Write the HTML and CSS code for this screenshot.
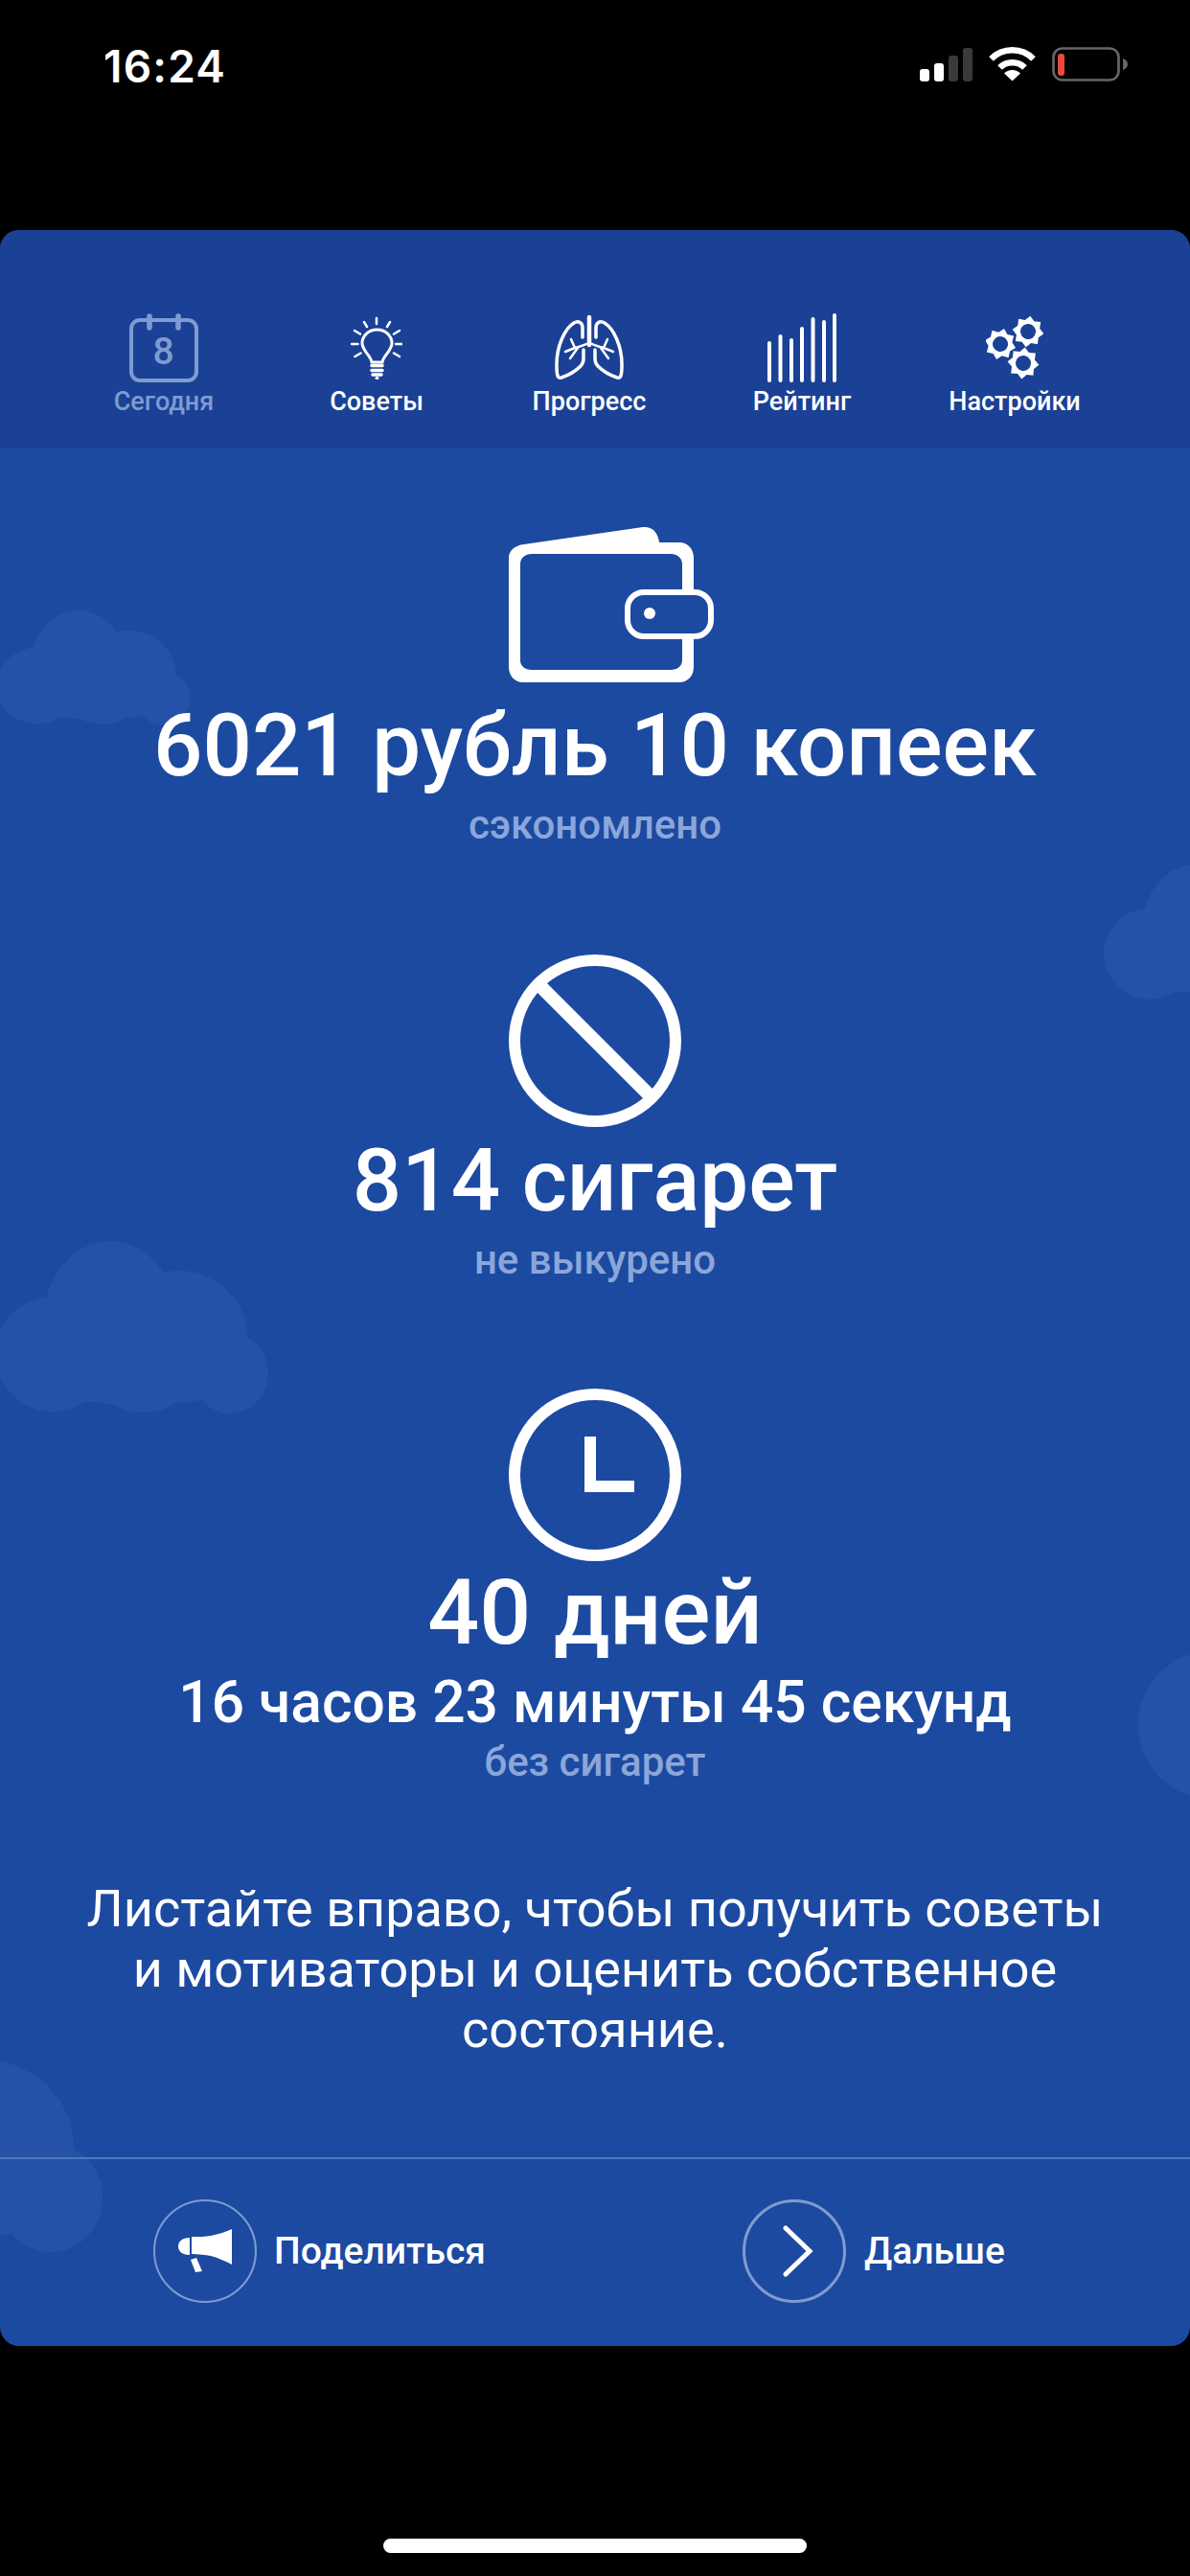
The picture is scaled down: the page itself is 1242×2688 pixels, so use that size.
FILE: index.html
```html
<!DOCTYPE html>
<html lang="ru">
<head>
<meta charset="utf-8">
<title>Сегодня</title>
<link rel="stylesheet" href="styles.css">
</head>
<body>
<svg class="defs" width="0" height="0"><defs>
  <g id="cloud" fill="#2552a8">
    <ellipse cx="55" cy="118" rx="60" ry="60"/>
    <ellipse cx="115" cy="85" rx="70" ry="85"/>
    <ellipse cx="187" cy="100" rx="71" ry="69"/>
    <ellipse cx="240" cy="138" rx="40" ry="42"/>
    <ellipse cx="150" cy="130" rx="55" ry="49"/>
    <rect x="50" y="100" width="150" height="68"/>
  </g>
  <path id="gear" fill-rule="evenodd" d="M0-16.500L4.780-11.550L11.670-11.670L11.550-4.780L16.500 0L11.550 4.780L11.670 11.670L4.780 11.550L0 16.500L-4.780 11.550L-11.670 11.670L-11.550 4.780L-16.500 0L-11.550-4.780L-11.670-11.670L-4.780-11.550ZM8 0a8 8 0 1 0-16 0a8 8 0 1 0 16 0Z"/>
</defs></svg>
<div class="phone">
  <header class="statusbar">
    <span class="time">16:24</span>
    <div class="indicators">
      <svg class="sig" width="55" height="36" viewBox="0 0 55 36"><rect x="0" y="22" width="10" height="13" rx="3" fill="#fff"/><rect x="15" y="16" width="10" height="19" rx="3" fill="#fff"/><rect x="30" y="8" width="10" height="27" rx="3" fill="#3a3a3a"/><rect x="45" y="0" width="10" height="35" rx="3" fill="#3a3a3a"/></svg>
      <svg class="wifi" width="49" height="36" viewBox="0 0 49 36"><path d="M2.500 12.500 A31 31 0 0 1 46.500 12.500" fill="none" stroke="#fff" stroke-width="6.500"/><path d="M11.500 21.500 A18.500 18.500 0 0 1 37.500 21.500" fill="none" stroke="#fff" stroke-width="6.500"/><path d="M16 27.500 A12 12 0 0 1 33 27.500 L24.500 35.500Z" fill="#fff"/></svg>
      <svg class="batt" width="79" height="37" viewBox="0 0 79 37"><rect x="1.500" y="1.500" width="68" height="33" rx="9" fill="none" stroke="#666" stroke-width="2.700"/><rect x="6" y="7" width="7" height="23" rx="3" fill="#eb4a3a"/><path d="M74 12 C77 13 79 15 79 18 C79 21 77 23 74 24Z" fill="#666"/></svg>
    </div>
  </header>

  <main class="card">
    <svg class="cloud c1" viewBox="0 0 280 200" preserveAspectRatio="none"><use href="#cloud"/></svg>
    <svg class="cloud c2" viewBox="0 0 280 200" preserveAspectRatio="none"><use href="#cloud"/></svg>
    <svg class="cloud c3" viewBox="0 0 280 200" preserveAspectRatio="none"><use href="#cloud"/></svg>
    <svg class="cloud c4" viewBox="0 0 280 200" preserveAspectRatio="none"><use href="#cloud"/></svg>
    <svg class="cloud c5" viewBox="0 0 280 200" preserveAspectRatio="none"><use href="#cloud"/></svg>

    <nav class="tabs">
      <div class="tab muted">
        <svg width="72" height="72" viewBox="0 0 72 72"><rect x="2" y="7" width="68" height="63" rx="9" fill="none" stroke="#7e9bd2" stroke-width="4"/><path d="M21 3v12M51 3v12" stroke="#7e9bd2" stroke-width="5.500" stroke-linecap="round"/><text x="35.500" y="53" class="cal">8</text></svg>
        <span>Сегодня</span>
      </div>
      <div class="tab">
        <svg width="54" height="72" viewBox="0 0 54 72" fill="none" stroke="#fff"><path d="M22 51 C21 44 12 39 12 31 A15.500 14 0 0 1 43 31 C43 39 34 44 33 51Z" stroke-width="3"/><path d="M22 54.500h11M22 59.500h11M23 64h9" stroke-width="3.500" stroke-linecap="round"/><path d="M27 67.500h1" stroke-width="3" stroke-linecap="round"/><path d="M27 5v6M14 9l3 5M41 9l-3 5M4 18l6 3.500M51 18l-6 3.500M1 32h6.500M54 32h-7M4.500 45l6-3.500M51 45l-6-3.500" stroke-width="2.500" stroke-linecap="round"/></svg>
        <span>Советы</span>
      </div>
      <div class="tab">
        <svg width="72" height="72" viewBox="0 0 72 72" fill="none" stroke="#fff" stroke-linecap="round" stroke-linejoin="round"><g transform="translate(0 3)"><path d="M36 1V30" stroke-width="4.500"/><path d="M29 22 V12 C29 7 25 4 20 7 C10 13 2 32 2 50 C2 58 2 66 7 64 C13 62 22 57 27 52 C29 50 30 47 30 44 V35" stroke-width="3.500"/><path d="M43 22 V12 C43 7 47 4 52 7 C62 13 70 32 70 50 C70 58 70 66 65 64 C59 62 50 57 45 52 C43 50 42 47 42 44 V35" stroke-width="3.500"/><path d="M36 28 C30 30 26 32 21 33 L11 37M36 28 C42 30 46 32 51 33 L61 37M21 33 L17 24M51 33 L55 24M24 33 L16 44M48 33 L56 44" stroke-width="2.500"/></g></svg>
        <span>Прогресс</span>
      </div>
      <div class="tab">
        <svg width="72" height="72" viewBox="0 0 72 72" fill="#fff"><rect x="0" y="29" width="4" height="43" rx="2"/><rect x="11.500" y="22" width="4" height="50" rx="2"/><rect x="23" y="26" width="4" height="46" rx="2"/><rect x="34" y="14" width="4" height="58" rx="2"/><rect x="45.500" y="4" width="4" height="68" rx="2"/><rect x="57" y="7" width="4" height="65" rx="2"/><rect x="68" y="0" width="4" height="72" rx="2"/></svg>
        <span>Рейтинг</span>
      </div>
      <div class="tab">
        <svg width="60" height="72" viewBox="0 0 60 72" fill="#fff"><use href="#gear" transform="translate(44 19) rotate(8)"/><use href="#gear" transform="translate(15 32) rotate(14)"/><use href="#gear" transform="translate(39 52) rotate(6)"/></svg>
        <span>Настройки</span>
      </div>
    </nav>

    <section class="stats">
      <div class="stat">
        <svg class="big wallet" width="214" height="163" viewBox="0 0 214 163"><path fill="#fff" fill-rule="evenodd" d="M16 19 L140 1 C150 0 156 7 157 17 L178 17 C187 17 193 24 193 33 L193 147 C193 157 186 163 178 163 L15 163 C6 163 0 156 0 147 L0 33 C0 26 6 20 16 19Z M24 29 L169 29 C176 29 181 33 181 40 L181 140 C181 146 176 150 169 150 L24 150 C17 150 12 146 12 140 L12 40 C12 33 17 29 24 29Z"/><rect x="124" y="69" width="87" height="46" rx="17" fill="#1c4aa1" stroke="#fff" stroke-width="6"/><circle cx="147" cy="91" r="6" fill="#fff"/></svg>
        <div class="value">6021 рубль 10 копеек</div>
        <div class="caption">сэкономлено</div>
      </div>
      <div class="stat s2">
        <svg class="big" width="180" height="180" viewBox="0 0 180 180"><circle cx="90" cy="90" r="84" fill="none" stroke="#fff" stroke-width="12"/><path d="M30 30 L150 150" stroke="#fff" stroke-width="14"/></svg>
        <div class="value">814 сигарет</div>
        <div class="caption">не выкурено</div>
      </div>
      <div class="stat s3">
        <svg class="big" width="180" height="180" viewBox="0 0 180 180"><circle cx="90" cy="90" r="84" fill="none" stroke="#fff" stroke-width="12"/><path d="M85 50 V102 H131" fill="none" stroke="#fff" stroke-width="12"/></svg>
        <div class="value days">40 дней</div>
        <div class="value small">16 часов 23 минуты 45 секунд</div>
        <div class="caption">без сигарет</div>
      </div>
      <p class="hint">Листайте вправо, чтобы получить советы и мотиваторы и оценить собственное состояние.</p>
    </section>

    <footer class="actions">
      <div class="action share">
        <span class="round">
          <svg width="56" height="46" viewBox="0 0 56 46" fill="#fff"><path d="M12 9 C4 9 0 13 0 18 C0 23 4 27 12 27Z"/><path d="M14 8 C22 8 28 8 34 7 C42 5 50 3 56 0 L56 37 C50 34 42 30 34 28 C28 27 22 26 14 26Z"/><path d="M13 32 L19 30 L25 44 L18 45Z"/></svg>
        </span>
        <span>Поделиться</span>
      </div>
      <div class="action next">
        <span class="round thick">
          <svg width="32" height="54" viewBox="0 0 32 54" fill="none" stroke="#fff" stroke-width="5" stroke-linecap="round"><path d="M3 3 L28 27 L3 51"/></svg>
        </span>
        <span>Дальше</span>
      </div>
    </footer>
  </main>
  <div class="home"><i></i></div>
</div>
</body>
</html>
```

FILE: styles.css
```css
* { box-sizing: border-box; }
html, body { margin: 0; padding: 0; background: #000; }
.defs { position: absolute; }
.phone {
  width: 1242px;
  height: 2688px;
  background: #000;
  font-family: Roboto, "Noto Sans", sans-serif;
  color: #fff;
  display: flex;
  flex-direction: column;
  overflow: hidden;
}
.statusbar {
  height: 240px;
  flex: none;
  padding: 44px 65px 0 108px;
  display: flex;
  justify-content: space-between;
  align-items: flex-start;
}
.time { font-family: Inter, Roboto, sans-serif; font-size: 46px; font-weight: 600; line-height: 50px; letter-spacing: 1.2px; }
.indicators { display: flex; align-items: flex-start; gap: 17px; padding-top: 5px; }
.sig { margin-top: 1px; }

.card {
  position: relative;
  height: 2208px;
  flex: none;
  background: #1c4aa1;
  border-radius: 20px;
  overflow: hidden;
  display: flex;
  flex-direction: column;
}
.cloud { position: absolute; overflow: visible; }
.c1 { left: 0; top: 397px; width: 199px; height: 133px; }
.c2 { left: 1156px; top: 662px; width: 224px; height: 158px; }
.c3 { left: 0; top: 1055px; width: 280px; height: 200px; }
.c4 { left: 1194px; top: 1409px; width: 358px; height: 256px; }
.c5 { left: -271px; top: 1867px; width: 378px; height: 270px; }

.tabs {
  position: relative;
  flex: none;
  height: 228px;
  background: #1a4195;
  display: flex;
  padding: 87px 0 0 60px;
}
.tab {
  width: 222px;
  display: flex;
  flex-direction: column;
  align-items: center;
  gap: 1px;
  font-size: 27px;
  font-weight: 500;
  line-height: 38px;
  color: #fff;
}
.tab.muted { color: #7e9bd2; }
.tab svg { display: block; flex: none; }
.cal { font-family: Roboto, sans-serif; font-size: 39px; font-weight: 500; fill: #7e9bd2; text-anchor: middle; }

.stats {
  position: relative;
  flex: 1;
  display: flex;
  flex-direction: column;
  align-items: center;
  text-align: center;
  padding-top: 81px;
}
.stat { display: flex; flex-direction: column; align-items: center; }
.big { display: block; }
.wallet { margin-bottom: 10px; margin-left: 34px; }
.value { font-size: 90.500px; font-weight: 500; line-height: 100px; margin-top: 6px; white-space: nowrap; }
.value.days { font-size: 95px; margin-top: 4px; }
.value.small { font-size: 60.500px; line-height: 68px; margin-top: 10px; }
.caption { font-size: 42px; font-weight: 500; line-height: 46px; color: #8ba6d9; margin-top: 10px; white-space: nowrap; }
.s2 { margin-top: 112px; }
.s3 { margin-top: 111px; }
.s3 .caption { margin-top: 5px; }
.hint {
  width: 1080px;
  margin: 98px 0 0;
  font-size: 54px;
  line-height: 63px;
  font-weight: 400;
}

.actions {
  position: relative;
  flex: none;
  height: 197px;
  border-top: 2px solid #5077bf;
  display: flex;
  padding-top: 42px;
  font-size: 39px;
  font-weight: 500;
}
.action { display: flex; align-items: center; gap: 18px; height: 108px; }
.share { margin-left: 160px; width: 615px; }
.next { gap: 19px; }
.round {
  width: 108px;
  height: 108px;
  border-radius: 50%;
  border: 2px solid #7f9bd0;
  display: flex;
  align-items: center;
  justify-content: center;
  flex: none;
}
.round.thick { border-width: 3px; }
.next .round svg { margin-left: 8px; }
.home { flex: 1; display: flex; justify-content: center; align-items: flex-start; padding-top: 201px; }
.home i { display: block; width: 442px; height: 15px; border-radius: 8px; background: #fff; }
```
